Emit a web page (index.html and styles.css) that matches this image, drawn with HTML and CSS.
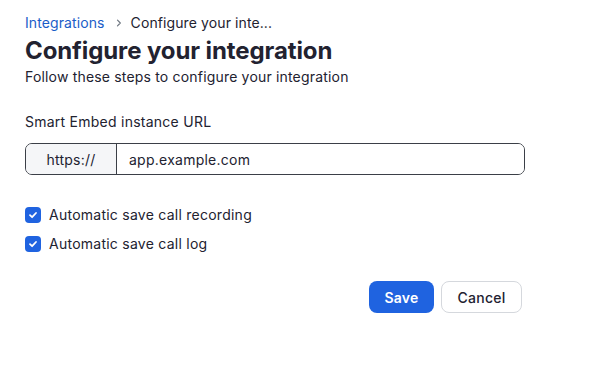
FILE: index.html
```html
<!DOCTYPE html>
<html lang="en">
<head>
    <meta charset="UTF-8">
    <meta name="viewport" content="width=device-width, initial-scale=1.0">
    <title>Configure your integration</title>
    <link rel="stylesheet" href="styles.css">
</head>
<body>
    <div class="page">
        <div class="breadcrumb">
            <a href="#" class="crumb-link">Integrations</a>
            <span class="crumb-sep">
                <svg width="8" height="8" viewBox="0 0 8 8"><path d="M2.5 1.2 L5.3 4 L2.5 6.8" fill="none" stroke="#6e7680" stroke-width="1.2" stroke-linecap="round" stroke-linejoin="round"/></svg>
            </span>
            <span class="crumb-current">Configure your inte...</span>
        </div>
        <h1 class="title">Configure your integration</h1>
        <p class="subtitle">Follow these steps to configure your integration</p>

        <form class="config-form">
            <label class="field-label" for="url">Smart Embed instance URL</label>
            <div class="url-input">
                <span class="url-prefix">https://</span>
                <input type="text" id="url" name="url" value="app.example.com">
            </div>

            <div class="checks">
                <label class="check-row">
                    <span class="check-box">
                        <svg width="10" height="10" viewBox="0 0 10 10"><path d="M2 5.2 L4.1 7.2 L8 3" fill="none" stroke="#fff" stroke-width="1.8" stroke-linecap="round" stroke-linejoin="round"/></svg>
                    </span>
                    Automatic save call recording
                </label>
                <label class="check-row">
                    <span class="check-box">
                        <svg width="10" height="10" viewBox="0 0 10 10"><path d="M2 5.2 L4.1 7.2 L8 3" fill="none" stroke="#fff" stroke-width="1.8" stroke-linecap="round" stroke-linejoin="round"/></svg>
                    </span>
                    Automatic save call log
                </label>
            </div>

            <div class="actions">
                <button type="button" class="btn btn-primary">Save</button>
                <button type="button" class="btn btn-default">Cancel</button>
            </div>
        </form>
    </div>
</body>
</html>
```

FILE: styles.css
```css
body {
    font-family: Inter, "Noto Sans", sans-serif;
    margin: 0;
    color: #222230;
    background: #fff;
}
.page {
    padding: 13px 25px;
    width: 500px;
}
.breadcrumb {
    display: flex;
    align-items: center;
    font-size: 14px;
    line-height: 20px;
    letter-spacing: 0.1px;
}
.crumb-link {
    color: #1a5dc8;
    text-decoration: none;
}
.crumb-sep {
    display: flex;
    margin: 0 8px 0 10px;
}
.crumb-current {
    color: #222230;
}
.title {
    font-size: 24px;
    font-weight: 700;
    line-height: 32px;
    margin: 2px 0 0;
    letter-spacing: -0.1px;
}
.subtitle {
    font-size: 14px;
    line-height: 20px;
    margin: 0;
    letter-spacing: 0.18px;
}
.config-form {
    margin-top: 25px;
    letter-spacing: 0.25px;
}
.field-label {
    display: block;
    font-size: 14px;
    line-height: 20px;
    margin-bottom: 11px;
}
.url-input {
    display: flex;
    height: 32px;
    border: 1px solid #3b3f47;
    border-radius: 7px;
    box-sizing: border-box;
    overflow: hidden;
}
.url-prefix {
    display: flex;
    align-items: center;
    justify-content: center;
    width: 90px;
    background: #f5f6f8;
    border-right: 1px solid #3b3f47;
    font-size: 14px;
}
.url-input input {
    flex: 1;
    border: none;
    outline: none;
    padding: 0 12px;
    font-family: inherit;
    font-size: 14px;
    letter-spacing: 0.25px;
    color: #222230;
}
.checks {
    margin-top: 30px;
    display: flex;
    flex-direction: column;
    gap: 9px;
}
.check-row {
    display: flex;
    align-items: center;
    gap: 8px;
    font-size: 14px;
    line-height: 20px;
}
.check-box {
    width: 16px;
    height: 16px;
    border-radius: 4px;
    background: #1f63e0;
    display: flex;
    align-items: center;
    justify-content: center;
}
.actions {
    display: flex;
    justify-content: flex-end;
    gap: 7px;
    margin-top: 27px;
    padding-right: 3px;
}
.btn {
    height: 32px;
    border-radius: 8px;
    font-family: inherit;
    font-size: 14px;
    font-weight: 600;
    letter-spacing: 0.25px;
    padding: 0 8px;
    box-sizing: border-box;
    cursor: pointer;
}
.btn-primary {
    background: #1f63e0;
    color: #fff;
    border: none;
    width: 65px;
}
.btn-default {
    background: #fff;
    color: #222230;
    border: 1px solid #d5d8dd;
    font-weight: 500;
    width: 81px;
}
```
